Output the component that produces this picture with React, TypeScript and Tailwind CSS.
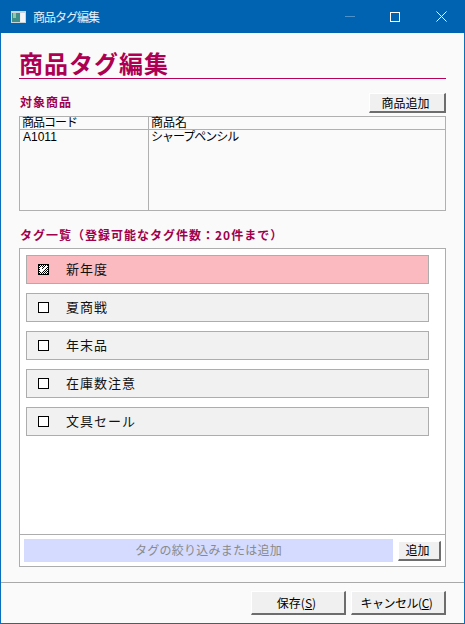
import React from 'react';

const tags = [
  { name: '新年度', checked: true },
  { name: '夏商戦', checked: false },
  { name: '年末品', checked: false },
  { name: '在庫数注意', checked: false },
  { name: '文具セール', checked: false },
];

const font = "font-['Noto_Sans_CJK_JP','Liberation_Sans',sans-serif]";

const WinButton: React.FC<{ className: string; children: React.ReactNode }> = ({ className, children }) => (
  <button className={`flex items-center justify-center bg-[#f0f0f0] border-t border-l border-t-white border-l-white border-r-2 border-b-2 border-r-[#6d6d6d] border-b-[#6d6d6d] pr-[3px] text-[12px] leading-none text-black ${className}`}>
    {children}
  </button>
);

// dithered check box, same as the classic owner drawn one
const CheckedBox = () => (
  <svg width="11" height="11" viewBox="0 0 11 11" shapeRendering="crispEdges">
    <defs>
      <pattern id="dither" width="2" height="2" patternUnits="userSpaceOnUse">
        <rect width="2" height="2" fill="#fff" />
        <rect width="1" height="1" fill="#000" />
        <rect x="1" y="1" width="1" height="1" fill="#000" />
      </pattern>
    </defs>
    <rect width="11" height="11" fill="#000" />
    <rect x="1" y="1" width="9" height="9" fill="url(#dither)" />
    <path d="M2 3h2v2h1v-1h1v-1h1v-1h2v2h-1v1h-1v1h-1v1h-1v1h-2v-1h-1z" fill="#fff" />
  </svg>
);

const TagRow: React.FC<{ name: string; checked: boolean }> = ({ name, checked }) => (
  <div className={`flex items-center h-[29px] border border-[#adadad] ${checked ? 'bg-[#fbb9c0]' : 'bg-[#f1f1f1]'}`}>
    <span className="ml-[11px] w-[11px] h-[11px] shrink-0">
      {checked ? <CheckedBox /> : <span className="block w-[11px] h-[11px] border border-black bg-white" />}
    </span>
    <span className="ml-[17px] pb-[2px] text-[13px] leading-none tracking-[1px] text-[#111]">{name}</span>
  </div>
);

export default function App() {
  return (
    <div className={`w-[465px] h-[624px] flex flex-col bg-[#fafafa] border border-t-0 border-[#0a6ebd] ${font}`}>
      {/* title bar */}
      <div className="h-[33px] -mx-px flex items-center bg-[#0063b1] text-white shrink-0">
        <svg className="ml-[11px]" width="15" height="12" viewBox="0 0 15 12" shapeRendering="crispEdges">
          <rect width="15" height="12" fill="#c9d3da" />
          <rect x="1" y="2" width="8" height="9" fill="#3f8f8a" />
          <rect x="2" y="2" width="3" height="5" fill="#8fc7a8" />
          <rect x="9" y="2" width="1" height="9" fill="#e8eef2" />
          <rect x="10" y="2" width="4" height="9" fill="#f2f4f5" />
        </svg>
        <span className="ml-[7px] text-[12px] leading-none tracking-[-1px] text-[#e6f0f8]">商品タグ編集</span>
        <div className="ml-auto flex items-center">
          <div className="w-[46px] h-[33px] flex items-center justify-center">
            <span className="block w-[10px] h-px bg-[#4d92c8]" />
          </div>
          <div className="w-[46px] h-[33px] flex items-center justify-center pr-[2px]">
            <span className="block w-[10px] h-[10px] border border-white" />
          </div>
          <div className="w-[46px] h-[33px] flex items-center justify-center pr-[2px]">
            <svg width="11" height="11" viewBox="0 0 11 11">
              <path d="M0.5 0.5 L10.5 10.5 M10.5 0.5 L0.5 10.5" stroke="#fff" strokeWidth="1" />
            </svg>
          </div>
        </div>
      </div>

      {/* body */}
      <div className="flex-1 flex flex-col px-[18px]">
        <h1 className="mt-[17px] h-[29px] border-b border-[#b8005a] text-[24px] leading-[26px] font-bold tracking-[1px] text-[#ad0052]">
          商品タグ編集
        </h1>

        <div className="mt-[14px] h-[20px] flex items-center justify-between">
          <span className="pb-[2px] pl-[1px] text-[12px] leading-none font-bold tracking-[1px] text-[#a0004c]">対象商品</span>
          <WinButton className="w-[77px] h-[20px]">商品追加</WinButton>
        </div>

        <div className="mt-[3px] h-[95px] border border-[#b0b0b0] grid grid-cols-[129px_1fr] grid-rows-[13px_1fr] text-[12px] leading-none text-black">
          <div className="border-r border-b border-[#b0b0b0] pl-[2px] pb-[2px] flex items-center tracking-[-1px]">商品コード</div>
          <div className="border-b border-[#b0b0b0] pl-[2px] pb-[2px] flex items-center">商品名</div>
          <div className="border-r border-[#b0b0b0] pl-[3px] pt-[1px] font-['Liberation_Sans']">A1011</div>
          <div className="pl-[2px] tracking-[-1px]">シャープペンシル</div>
        </div>

        <div className="mt-[17px] h-[14px] pl-[1px] text-[12px] leading-[14px] font-bold tracking-[1px] text-[#a0004c]">
          タグ一覧（登録可能なタグ件数：20件まで）
        </div>

        <div className="mt-[6px] h-[319px] border border-[#adadad] bg-white flex flex-col">
          <div className="flex-1 pl-[6px] pr-[16px] pt-[6px] flex flex-col gap-[9px]">
            {tags.map(t => (
              <TagRow key={t.name} name={t.name} checked={t.checked} />
            ))}
          </div>
          <div className="h-[32px] border-t border-[#adadad] flex items-center px-[4px]">
            <div className="w-[369px] h-[23px] bg-[#d4dbff] flex items-center justify-center pb-[2px] text-[12px] leading-none tracking-[0.25px] text-[#8a8a8a]">
              タグの絞り込みまたは追加
            </div>
            <WinButton className="ml-[5px] w-[43px] h-[20px]">追加</WinButton>
          </div>
        </div>
      </div>

      {/* footer */}
      <div className="h-[41px] border-t border-[#a9a9a9] flex items-start justify-end gap-[5px] pt-[8px] pr-[18px] shrink-0">
        <WinButton className="w-[95px] h-[24px]">
          保存(<span className="underline">S</span>)
        </WinButton>
        <WinButton className="w-[95px] h-[24px] tracking-[-0.5px]">
          キャンセル(<span className="underline">C</span>)
        </WinButton>
      </div>
    </div>
  );
}
